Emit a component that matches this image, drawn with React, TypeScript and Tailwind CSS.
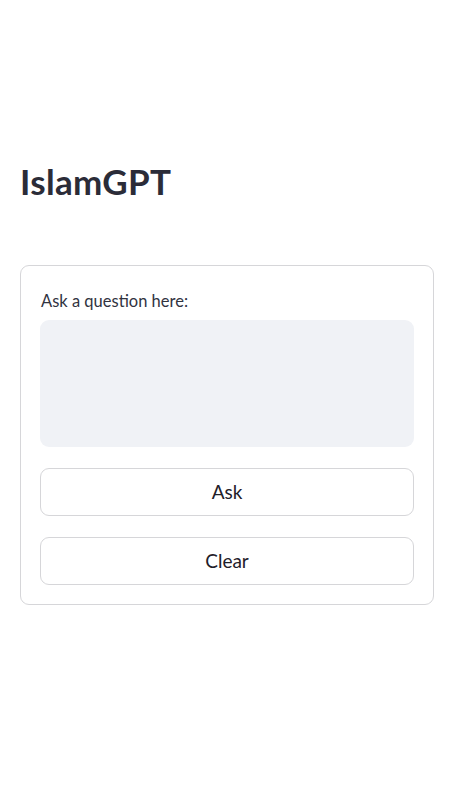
export default function App() {
  return (
    <div className="w-[450px] h-[800px] bg-white text-[#31333f]" style={{ fontFamily: '"Lato", "Noto Sans", sans-serif' }}>
      <div className="pl-5 pt-[158px]">
        <h1 className="text-[35px] font-bold leading-[46px] tracking-[0.3px] text-[#2b2c38]">IslamGPT</h1>
        <div className="mt-[61px] w-[414px] border border-[#d6d6d9] rounded-[9px] px-[19px] pt-[25px] pb-[19px] flex flex-col">
          <label className="text-[16.5px] leading-[20px] pl-[1px]">Ask a question here:</label>
          <div className="mt-[9px] h-[127px] bg-[#f0f2f6] rounded-[9px]" />
          <button className="mt-[21px] h-[48px] border border-[#d6d6d9] rounded-[9px] text-[19px] bg-white text-[#1f2029]">Ask</button>
          <button className="mt-[21px] h-[48px] border border-[#d6d6d9] rounded-[9px] text-[19px] bg-white text-[#1f2029]">Clear</button>
        </div>
      </div>
    </div>
  );
}
